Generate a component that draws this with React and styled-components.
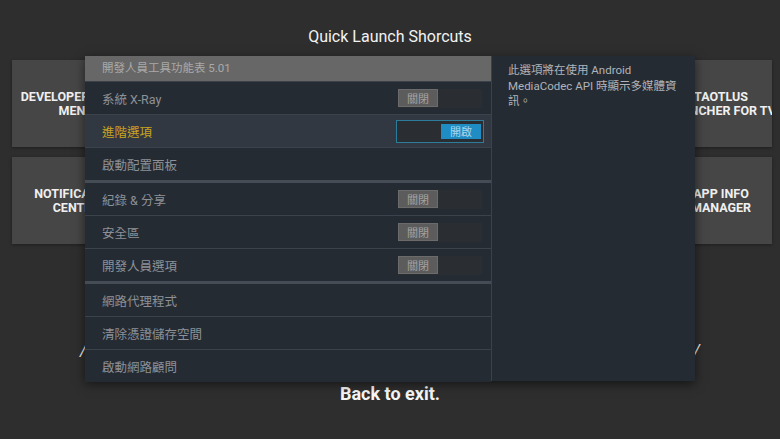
import React from 'react'
import styled, { createGlobalStyle } from 'styled-components'

const GlobalStyle = createGlobalStyle`
  html, body {
    margin: 0;
    padding: 0;
    background: #2e2e2e;
  }
  body {
    font-family: Roboto, "Noto Sans CJK TC", sans-serif;
  }
`

const Screen = styled.div`
  position: relative;
  width: 780px;
  height: 439px;
  overflow: hidden;
  background: #2e2e2e;
  display: flex;
  flex-direction: column;
`

const Title = styled.div`
  padding-top: 27px;
  height: 34px;
  box-sizing: border-box;
  text-align: center;
  font-size: 16px;
  line-height: 20px;
  color: #f2f2f2;
`

const TileGrid = styled.div`
  display: flex;
  justify-content: space-between;
  padding: 26px 8px 0 12px;
`

const TileColumn = styled.div`
  display: flex;
  flex-direction: column;
  gap: 10px;
`

const Tile = styled.div`
  width: ${p => p.$width}px;
  height: 87px;
  background: #464646;
  box-shadow: 0 1px 3px rgba(0, 0, 0, 0.35);
  display: flex;
  align-items: center;
  justify-content: center;
  overflow: hidden;
`

const TileLabel = styled.div`
  font-size: 12.5px;
  font-weight: 700;
  line-height: 14px;
  color: #f0f0f0;
  text-align: center;
  white-space: nowrap;
`

const HintRow = styled.div`
  display: flex;
  justify-content: space-between;
  padding: 98px 80px 0 80px;
  font-size: 16px;
  font-style: italic;
  line-height: 18px;
  color: #f2f2f2;
`

const BackText = styled.div`
  margin-top: 24px;
  text-align: center;
  font-size: 18px;
  font-weight: 700;
  line-height: 20px;
  color: #f6f6f6;
`

const Panel = styled.div`
  position: absolute;
  left: 85px;
  top: 56px;
  width: 610px;
  height: 325px;
  display: flex;
  background: #252b33;
  box-shadow: 0 3px 10px rgba(0, 0, 0, 0.55);
`

const List = styled.div`
  width: 406px;
  display: flex;
  flex-direction: column;
`

const ListHeader = styled.div`
  height: 25px;
  flex-shrink: 0;
  background: #676767;
  color: #a9a9a9;
  font-size: 11.5px;
  line-height: 25px;
  padding-left: 17px;
  border-bottom: 1px solid #3b424b;
`

const Row = styled.div`
  height: 32px;
  flex-shrink: 0;
  display: flex;
  align-items: center;
  justify-content: space-between;
  padding: 0 9px 0 17px;
  background: ${p => (p.$active ? '#323841' : '#252b33')};
  border-bottom: ${p => (p.$section ? '3px solid #454c55' : '1px solid #3b424b')};
  &:last-child {
    border-bottom: none;
  }
`

const RowLabel = styled.span`
  font-size: 12.5px;
  color: ${p => (p.$active ? '#c9a41f' : '#8d9197')};
`

const Toggle = styled.div`
  box-sizing: border-box;
  display: flex;
  justify-content: ${p => (p.$on ? 'flex-end' : 'flex-start')};
  align-items: center;
  background: #2a2d31;
  margin-right: ${p => (p.$on ? '-2px' : '0')};
  padding: ${p => (p.$on ? '2px' : '0')};
  width: ${p => (p.$on ? '88px' : '84px')};
  height: ${p => (p.$on ? '23px' : '19px')};
  border: ${p => (p.$on ? '1px solid #2c7c9b' : 'none')};
`

const Knob = styled.div`
  width: 40px;
  height: ${p => (p.$on ? '15px' : '18px')};
  box-sizing: border-box;
  display: flex;
  align-items: center;
  justify-content: center;
  font-size: 11px;
  background: ${p => (p.$on ? '#1f8dc4' : '#5c5c5c')};
  border: ${p => (p.$on ? 'none' : '1px solid #6b6b6b')};
  color: ${p => (p.$on ? '#a9d6ee' : '#a3a3a3')};
`

const Description = styled.div`
  flex: 1;
  border-left: 1px solid #3a424c;
  padding: 7px 12px 0 16px;
  font-size: 11.5px;
  line-height: 15.5px;
  color: #b0b4b9;
`

const rows = [
  { label: '系統 X-Ray', toggle: 'off' },
  { label: '進階選項', toggle: 'on', active: true },
  { label: '啟動配置面板', section: true },
  { label: '紀錄 & 分享', toggle: 'off' },
  { label: '安全區', toggle: 'off' },
  { label: '開發人員選項', toggle: 'off', section: true },
  { label: '網路代理程式' },
  { label: '清除憑證儲存空間' },
  { label: '啟動網路顧問' },
]

function App() {
  return (
    <Screen>
      <GlobalStyle />
      <Title>Quick Launch Shorcuts</Title>
      <TileGrid>
        <TileColumn>
          <Tile $width={128}>
            <TileLabel>DEVELOPER TOOLS<br />MENU</TileLabel>
          </Tile>
          <Tile $width={128}>
            <TileLabel>NOTIFICATION<br />CENTRE</TileLabel>
          </Tile>
        </TileColumn>
        <TileColumn>
          <Tile $width={102}>
            <TileLabel>TAOTLUS<br />LAUNCHER FOR TV</TileLabel>
          </Tile>
          <Tile $width={102}>
            <TileLabel>APP INFO<br />MANAGER</TileLabel>
          </Tile>
        </TileColumn>
      </TileGrid>
      <HintRow>
        <span>/</span>
        <span>/</span>
      </HintRow>
      <BackText>Back to exit.</BackText>

      <Panel>
        <List>
          <ListHeader>開發人員工具功能表 5.01</ListHeader>
          {rows.map(r => (
            <Row key={r.label} $active={r.active} $section={r.section}>
              <RowLabel $active={r.active}>{r.label}</RowLabel>
              {r.toggle && (
                <Toggle $on={r.toggle === 'on'}>
                  <Knob $on={r.toggle === 'on'}>{r.toggle === 'on' ? '開啟' : '關閉'}</Knob>
                </Toggle>
              )}
            </Row>
          ))}
        </List>
        <Description>
          此選項將在使用 Android<br />
          MediaCodec API 時顯示多媒體資<br />
          訊。
        </Description>
      </Panel>
    </Screen>
  )
}

export default App
